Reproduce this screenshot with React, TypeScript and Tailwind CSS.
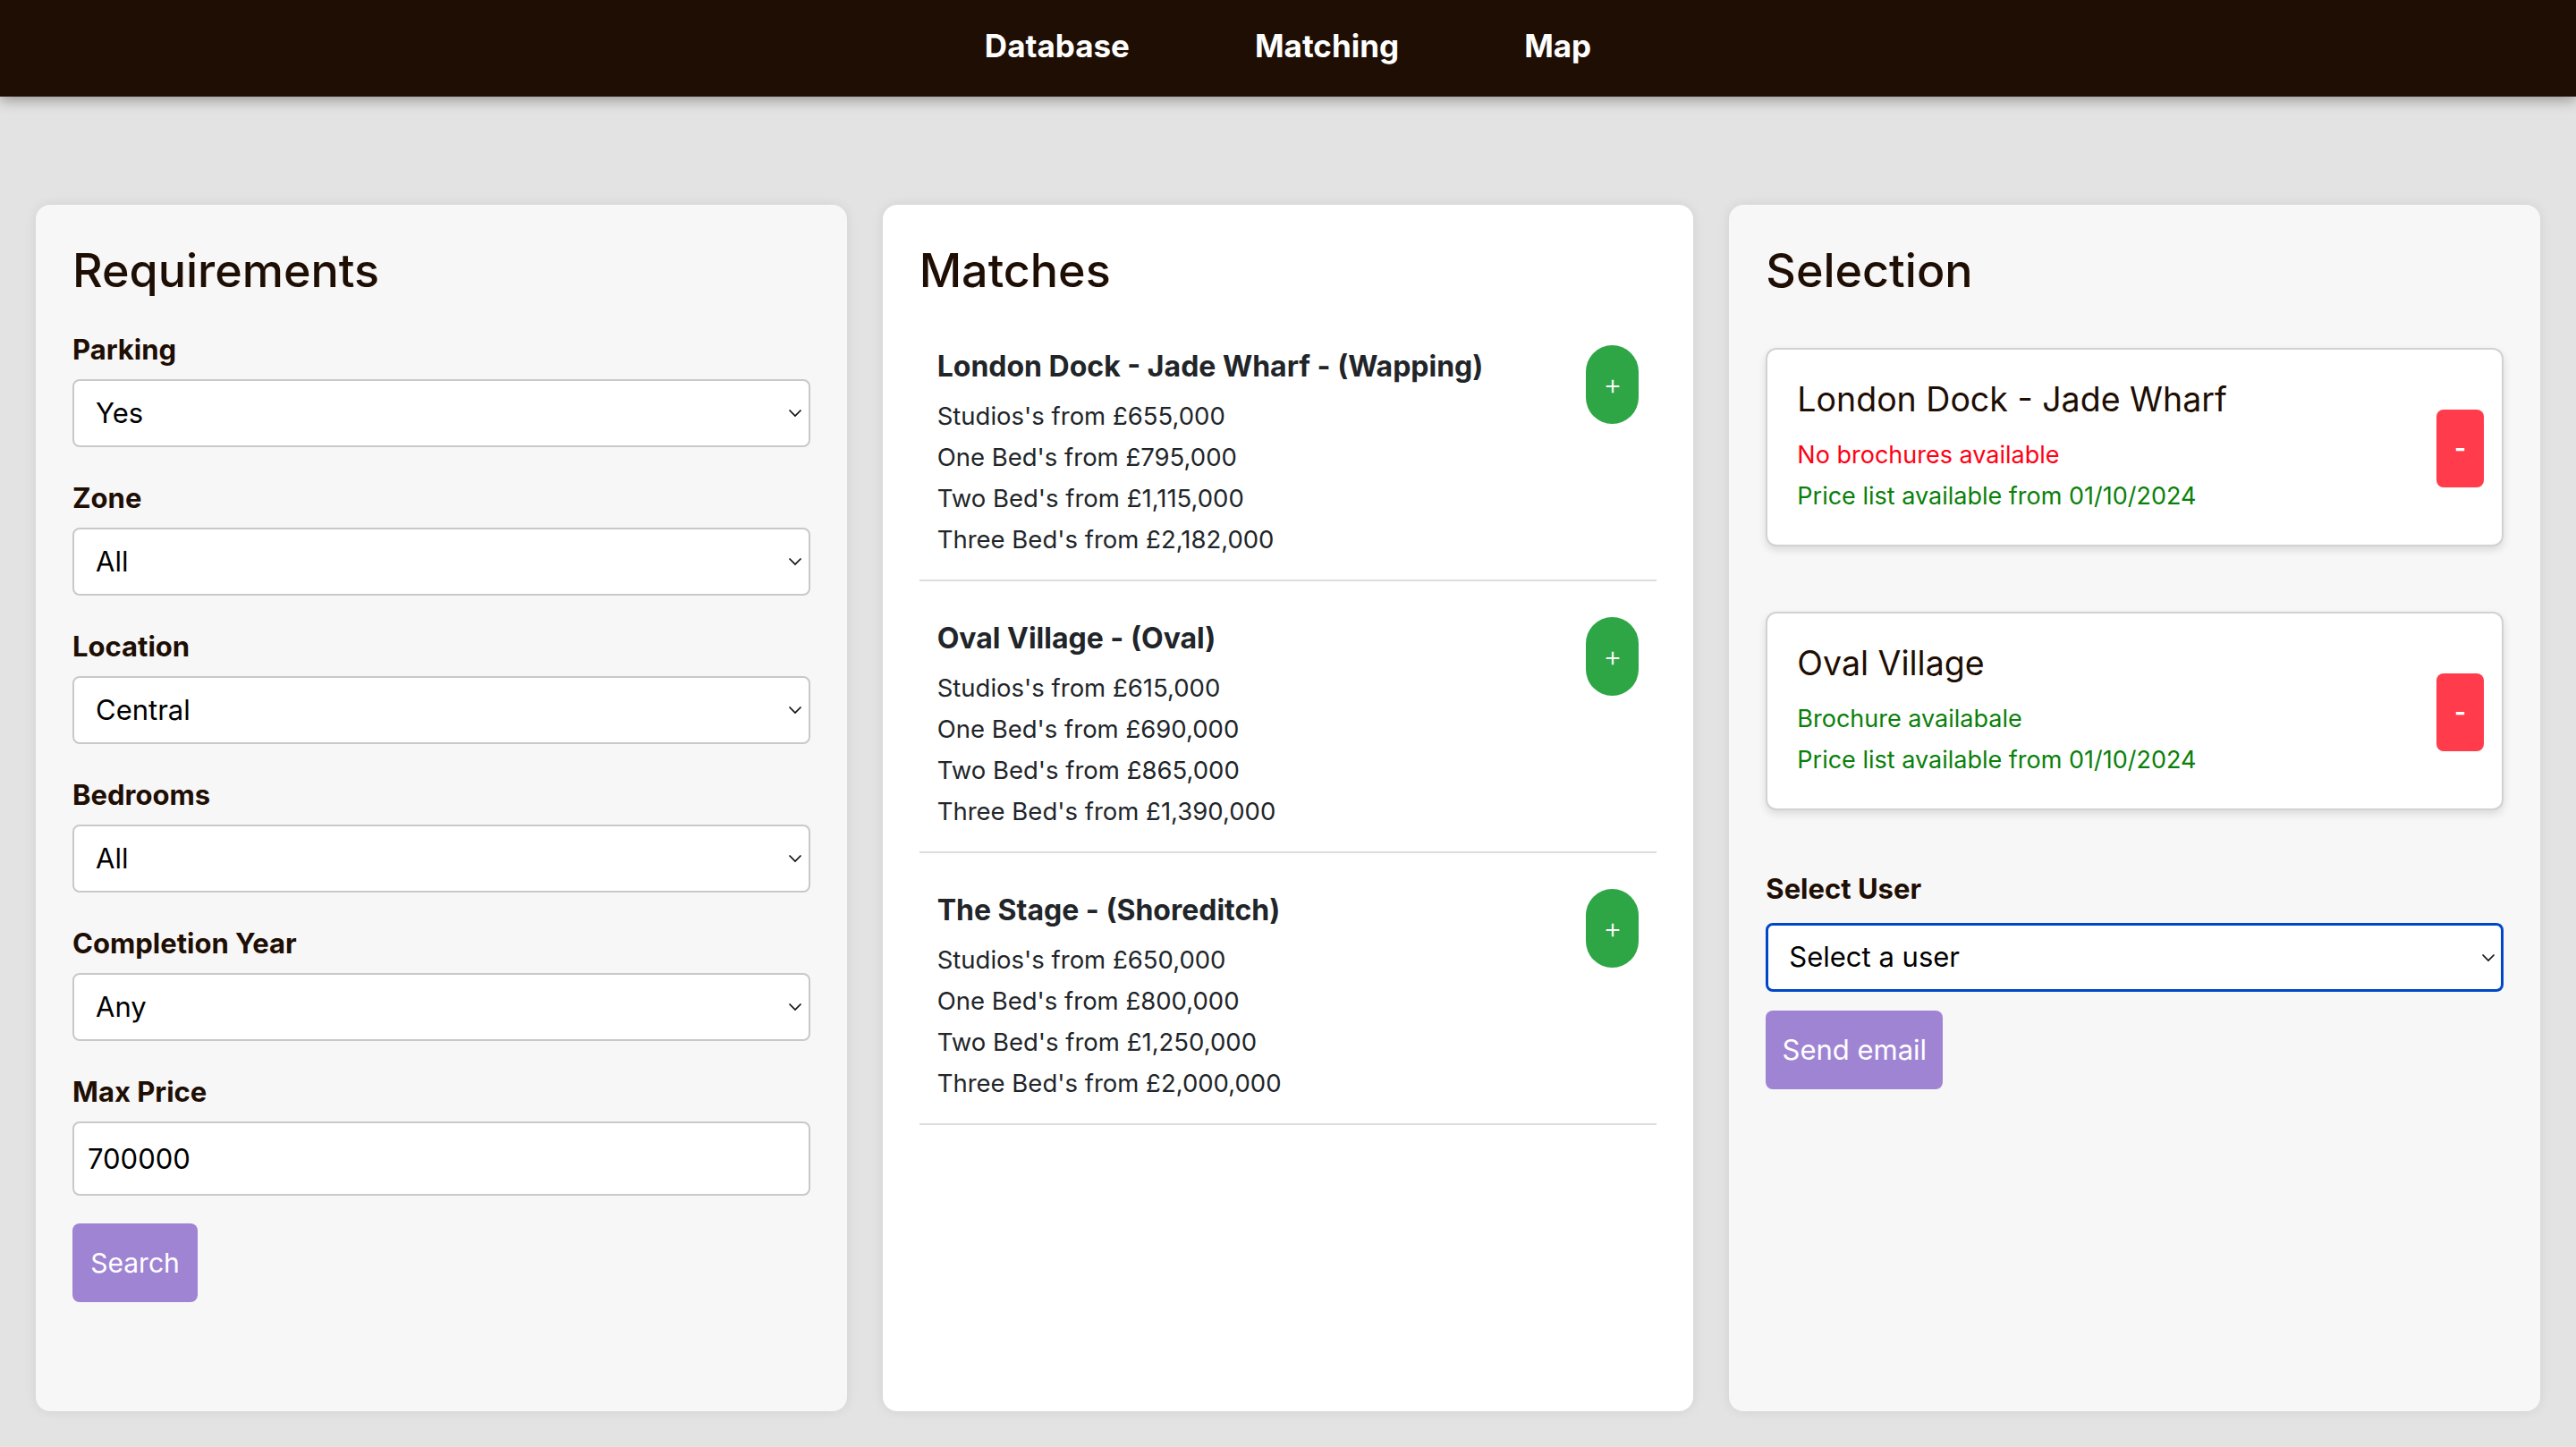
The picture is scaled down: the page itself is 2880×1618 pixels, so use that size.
import React from "react";

function Chevron() {
  return (
    <svg
      className="pointer-events-none absolute right-[9px] top-1/2 -translate-y-1/2"
      width="16"
      height="10"
      viewBox="0 0 16 10"
    >
      <path d="M1.5 1.5 L8 8 L14.5 1.5" fill="none" stroke="#111" strokeWidth="1.7" />
    </svg>
  );
}

function SelectBox({ value }: { value: string }) {
  return (
    <div className="relative mt-[16px]">
      <select
        defaultValue={value}
        className="block h-[76px] w-full appearance-none rounded-[8px] border-2 border-[#c9c9c9] bg-white pl-[24px] text-[31px] text-black outline-none"
      >
        <option value={value}>{value}</option>
      </select>
      <Chevron />
    </div>
  );
}

function Label({ children, first }: { children: React.ReactNode; first?: boolean }) {
  return (
    <div
      className={
        first
          ? "mt-[39px] text-[31px] font-bold leading-[35px] text-[#1e0e04]"
          : "mt-[39px] text-[31px] font-bold leading-[35px] text-[#1e0e04]"
      }
    >
      {children}
    </div>
  );
}

const matches = [
  {
    title: "London Dock - Jade Wharf - (Wapping)",
    lines: [
      "Studios's from £655,000",
      "One Bed's from £795,000",
      "Two Bed's from £1,115,000",
      "Three Bed's from £2,182,000",
    ],
  },
  {
    title: "Oval Village - (Oval)",
    lines: [
      "Studios's from £615,000",
      "One Bed's from £690,000",
      "Two Bed's from £865,000",
      "Three Bed's from £1,390,000",
    ],
  },
  {
    title: "The Stage - (Shoreditch)",
    lines: [
      "Studios's from £650,000",
      "One Bed's from £800,000",
      "Two Bed's from £1,250,000",
      "Three Bed's from £2,000,000",
    ],
  },
];

function SelectionBox({
  title,
  brochure,
  brochureOk,
  first,
}: {
  title: string;
  brochure: string;
  brochureOk: boolean;
  first?: boolean;
}) {
  return (
    <div
      className={
        (first ? "mt-[55px] " : "mt-[73px] ") +
        "flex items-center justify-between rounded-[12px] border-2 border-[#d2d2d2] bg-white pb-[31px] pl-[33px] pr-[20px] pt-[33px] shadow-[0_4px_10px_rgba(0,0,0,0.12)]"
      }
    >
      <div>
        <div className="text-[37.5px] leading-[46px] text-[#1e0e04]">{title}</div>
        <div
          className={
            brochureOk
              ? "mt-[16px] text-[27px] leading-[46px] text-[#0a800a]"
              : "mt-[16px] text-[27px] leading-[46px] text-[#ff0014]"
          }
        >
          {brochure}
        </div>
        <div className="text-[27px] leading-[46px] text-[#0a800a]">
          Price list available from 01/10/2024
        </div>
      </div>
      <button className="flex h-[87px] w-[53px] items-center justify-center rounded-[8px] bg-[#ff3b4c] text-[28px] font-bold text-white">
        -
      </button>
    </div>
  );
}

export default function App() {
  return (
    <div className="flex h-screen flex-col bg-[#e3e3e3] font-['Inter',sans-serif]">
      <nav className="relative z-10 flex h-[108px] shrink-0 items-center justify-center gap-[140px] bg-[#1f0e03] pb-[7px] shadow-[0_4px_14px_rgba(0,0,0,0.35)]">
        <a className="text-[35px] font-bold leading-[42px] text-white">Database</a>
        <a className="text-[35px] font-bold leading-[42px] text-white">Matching</a>
        <a className="text-[35px] font-bold leading-[42px] text-white">Map</a>
      </nav>

      <main className="grid min-h-0 flex-1 grid-cols-3 gap-[40px] px-[40px] pb-[40px] pt-[121px]">
        {/* Requirements */}
        <section className="rounded-[16px] bg-[#f7f7f7] px-[41px] pt-[43px] shadow-[0_0_14px_rgba(0,0,0,0.08)]">
          <h2 className="text-[52px] font-medium leading-[62px] text-[#1e0e04]">Requirements</h2>
          <Label first>Parking</Label>
          <SelectBox value="Yes" />
          <Label>Zone</Label>
          <SelectBox value="All" />
          <Label>Location</Label>
          <SelectBox value="Central" />
          <Label>Bedrooms</Label>
          <SelectBox value="All" />
          <Label>Completion Year</Label>
          <SelectBox value="Any" />
          <Label>Max Price</Label>
          <input
            defaultValue="700000"
            className="mt-[16px] block h-[83px] w-full rounded-[8px] border-2 border-[#c9c9c9] bg-white px-[15px] text-[31px] text-black outline-none"
          />
          <button className="mt-[31px] h-[88px] w-[140px] rounded-[8px] bg-[#a084d4] text-[30px] text-white">
            Search
          </button>
        </section>

        {/* Matches */}
        <section className="rounded-[16px] bg-white px-[41px] pt-[43px] shadow-[0_0_14px_rgba(0,0,0,0.08)]">
          <h2 className="text-[52px] font-medium leading-[62px] text-[#1e0e04]">Matches</h2>
          <div className="mt-[12px]">
            {matches.map((m) => (
              <div
                key={m.title}
                className="flex justify-between border-b-2 border-[#dcdcdc] px-[20px] pb-[22px] pt-[40px]"
              >
                <div>
                  <div className="text-[32px] font-bold leading-[48px] text-[#212529]">{m.title}</div>
                  <div className="mt-[8px]">
                    {m.lines.map((l) => (
                      <div key={l} className="text-[27.5px] leading-[46px] text-[#212529]">
                        {l}
                      </div>
                    ))}
                  </div>
                </div>
                <button className="flex h-[88px] w-[59px] shrink-0 items-center justify-center rounded-full bg-[#2ea646] text-[32px] font-light text-white">
                  +
                </button>
              </div>
            ))}
          </div>
        </section>

        {/* Selection */}
        <section className="rounded-[16px] bg-[#f7f7f7] px-[41px] pt-[43px] shadow-[0_0_14px_rgba(0,0,0,0.08)]">
          <h2 className="text-[52px] font-medium leading-[62px] text-[#1e0e04]">Selection</h2>
          <SelectionBox
            first
            title="London Dock - Jade Wharf"
            brochure="No brochures available"
            brochureOk={false}
          />
          <SelectionBox title="Oval Village" brochure="Brochure availabale" brochureOk />
          <div className="mt-[70px] text-[31px] font-bold leading-[35px] text-[#1e0e04]">Select User</div>
          <div className="relative mt-[21px]">
            <select
              defaultValue="Select a user"
              className="block h-[77px] w-full appearance-none rounded-[8px] border-[3px] border-[#0047c8] bg-white pl-[23px] text-[31px] text-black outline-none"
            >
              <option value="Select a user">Select a user</option>
            </select>
            <Chevron />
          </div>
          <button className="mt-[21px] h-[88px] w-[198px] rounded-[8px] bg-[#a084d4] text-[31px] text-white">
            Send email
          </button>
        </section>
      </main>
    </div>
  );
}
